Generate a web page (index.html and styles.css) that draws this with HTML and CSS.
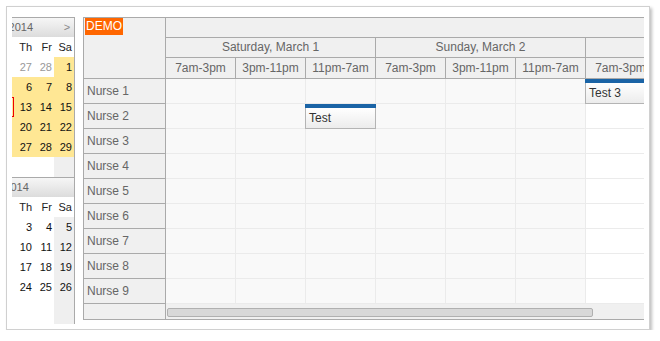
FILE: index.html
```html
<!DOCTYPE html>
<html>
<head>
    <title>Shift Scheduling</title>
    <link rel="stylesheet" href="styles.css">
</head>
<body>
    <div class="shot">
        <div class="viewport">
            <div class="nav-wrap">
                <div class="nav">
                    <div class="month">
                        <div class="month-title"><span class="arrow">&lt;</span><span class="title-text">March 2014</span><span class="arrow">&gt;</span></div>
                        <div class="week names"><span>Su</span><span>Mo</span><span>Tu</span><span>We</span><span>Th</span><span>Fr</span><span>Sa</span></div>
                        <div class="week"><span class="other">23</span><span class="other">24</span><span class="other">25</span><span class="other">26</span><span class="other">27</span><span class="other">28</span><span class="sel">1</span></div>
                        <div class="week"><span class="sel">2</span><span class="sel">3</span><span class="sel">4</span><span class="sel">5</span><span class="sel">6</span><span class="sel">7</span><span class="sel">8</span></div>
                        <div class="week"><span class="sel">9</span><span class="sel">10</span><span class="sel">11</span><span class="sel today">12</span><span class="sel">13</span><span class="sel">14</span><span class="sel">15</span></div>
                        <div class="week"><span class="sel">16</span><span class="sel">17</span><span class="sel">18</span><span class="sel">19</span><span class="sel">20</span><span class="sel">21</span><span class="sel">22</span></div>
                        <div class="week"><span class="sel">23</span><span class="sel">24</span><span class="sel">25</span><span class="sel">26</span><span class="sel">27</span><span class="sel">28</span><span class="sel">29</span></div>
                        <div class="week"><span class="we">30</span><span>31</span><span></span><span></span><span></span><span></span><span class="we"></span></div>
                    </div>
                    <div class="month">
                        <div class="month-title"><span class="arrow"></span><span class="title-text">April 2014</span><span class="arrow"></span></div>
                        <div class="week names"><span>Su</span><span>Mo</span><span>Tu</span><span>We</span><span>Th</span><span>Fr</span><span>Sa</span></div>
                        <div class="week"><span class="we other">30</span><span class="other">31</span><span>1</span><span>2</span><span>3</span><span>4</span><span class="we">5</span></div>
                        <div class="week"><span class="we">6</span><span>7</span><span>8</span><span>9</span><span>10</span><span>11</span><span class="we">12</span></div>
                        <div class="week"><span class="we">13</span><span>14</span><span>15</span><span>16</span><span>17</span><span>18</span><span class="we">19</span></div>
                        <div class="week"><span class="we">20</span><span>21</span><span>22</span><span>23</span><span>24</span><span>25</span><span class="we">26</span></div>
                        <div class="week"><span class="we"></span><span></span><span></span><span></span><span></span><span></span><span class="we"></span></div>
                        <div class="week"><span class="we"></span><span></span><span></span><span></span><span></span><span></span><span class="we"></span></div>
                    </div>
                </div>
            </div>

            <div class="scheduler">
                <div class="rows-head">
                    <div class="corner"><span class="demo">DEMO</span></div>
                    <div class="res">Nurse 1</div>
                    <div class="res">Nurse 2</div>
                    <div class="res">Nurse 3</div>
                    <div class="res">Nurse 4</div>
                    <div class="res">Nurse 5</div>
                    <div class="res">Nurse 6</div>
                    <div class="res">Nurse 7</div>
                    <div class="res">Nurse 8</div>
                    <div class="res">Nurse 9</div>
                    <div class="res-scroll"></div>
                </div>
                <div class="main">
                    <div class="hrow top"></div>
                    <div class="hrow">
                        <div class="day">Saturday, March 1</div>
                        <div class="day">Sunday, March 2</div>
                        <div class="day">Monday, March 3</div>
                    </div>
                    <div class="hrow shifts">
                        <div class="shift">7am-3pm</div>
                        <div class="shift">3pm-11pm</div>
                        <div class="shift">11pm-7am</div>
                        <div class="shift">7am-3pm</div>
                        <div class="shift">3pm-11pm</div>
                        <div class="shift">11pm-7am</div>
                        <div class="shift">7am-3pm</div>
                        <div class="shift">3pm-11pm</div>
                    </div>
                    <div class="grid">
                        <div class="row"><span></span><span></span><span></span><span></span><span></span><span></span><span class="free"></span><span class="free"></span></div>
                        <div class="row"><span></span><span></span><span></span><span></span><span></span><span></span><span class="free"></span><span class="free"></span></div>
                        <div class="row"><span></span><span></span><span></span><span></span><span></span><span></span><span class="free"></span><span class="free"></span></div>
                        <div class="row"><span></span><span></span><span></span><span></span><span></span><span></span><span class="free"></span><span class="free"></span></div>
                        <div class="row"><span></span><span></span><span></span><span></span><span></span><span></span><span class="free"></span><span class="free"></span></div>
                        <div class="row"><span></span><span></span><span></span><span></span><span></span><span></span><span class="free"></span><span class="free"></span></div>
                        <div class="row"><span></span><span></span><span></span><span></span><span></span><span></span><span class="free"></span><span class="free"></span></div>
                        <div class="row"><span></span><span></span><span></span><span></span><span></span><span></span><span class="free"></span><span class="free"></span></div>
                        <div class="row"><span></span><span></span><span></span><span></span><span></span><span></span><span class="free"></span><span class="free"></span></div>

                        <div class="event" style="top: 25px; left: 139px;"><div class="event-bar"></div><div class="event-body">Test</div></div>
                        <div class="event" style="top: 0px; left: 419px;"><div class="event-bar"></div><div class="event-body">Test 3</div></div>
                    </div>
                    <div class="hscroll"><div class="thumb"></div></div>
                </div>
            </div>
        </div>
    </div>
</body>
</html>
```

FILE: styles.css
```css
body {
    margin: 0;
    background: #fff;
    font-family: "Liberation Sans", Arial, sans-serif;
}
.shot {
    margin: 6px 0 0 6px;
    width: 632px;
    height: 312px;
    padding: 5px;
    border: 1px solid #d0d0d0;
    background: #fff;
    box-shadow: 2px 2px 3px rgba(0, 0, 0, 0.25);
}
.viewport {
    width: 632px;
    height: 312px;
    overflow: hidden;
    display: flex;
    align-items: flex-start;
    gap: 8px;
    padding-top: 5px;
    box-sizing: border-box;
}

/* navigator */
.nav-wrap {
    flex-shrink: 0;
    width: 62px;
    height: 340px;
    overflow: hidden;
    border-right: 1px solid #aaa;
}
.nav {
    width: 140px;
    margin-left: -78px;
    font-size: 11px;
}
.month {
    border-top: 1px solid #aaa;
}
.month-title {
    display: flex;
    height: 19px;
    line-height: 19px;
    color: #666;
    background: linear-gradient(#f6f6f6, #dcdcdc);
}
.month-title .arrow {
    width: 14px;
    text-align: center;
    color: #888;
}
.month-title .title-text {
    flex: 1;
    text-align: center;
}
.week {
    display: flex;
}
.week span {
    width: 20px;
    height: 20px;
    line-height: 20px;
    padding-right: 2px;
    box-sizing: border-box;
    text-align: right;
    color: #111;
}
.week.names span {
    color: #222;
}
.week .we {
    background: #efefef;
}
.week .other {
    color: #999;
}
.week .sel {
    background: #ffe794;
}
.week .today {
    border: 1px solid #e00;
}

/* scheduler */
.scheduler {
    flex-shrink: 0;
    display: flex;
    border: 1px solid #aaa;
    font-size: 12px;
    color: #666;
}
.rows-head {
    width: 81px;
    border-right: 1px solid #aaa;
    background: #f0f0f0;
}
.corner {
    height: 60px;
    border-bottom: 1px solid #aaa;
    padding-left: 1px;
}
.demo {
    display: inline-block;
    padding: 0 1px;
    line-height: 17px;
    background: #ff6600;
    color: #fff;
}
.res {
    height: 24px;
    line-height: 24px;
    padding-left: 3px;
    border-bottom: 1px solid #aaa;
}
.res-scroll {
    height: 15px;
}
.main {
    width: 560px;
}
.hrow {
    display: flex;
    height: 19px;
    line-height: 19px;
    background: #f0f0f0;
    border-bottom: 1px solid #aaa;
}
.hrow.shifts {
    height: 20px;
    line-height: 20px;
}
.day {
    flex-shrink: 0;
    width: 210px;
    box-sizing: border-box;
    border-right: 1px solid #aaa;
    text-align: center;
    white-space: nowrap;
}
.shift {
    width: 70px;
    box-sizing: border-box;
    border-right: 1px solid #aaa;
    text-align: center;
    white-space: nowrap;
}
.grid {
    position: relative;
}
.row {
    display: flex;
    height: 24px;
    border-bottom: 1px solid #ebebeb;
}
.row span {
    width: 70px;
    box-sizing: border-box;
    border-right: 1px solid #ebebeb;
    background: #f9f9f9;
}
.row span.free {
    background: #fff;
}
.event {
    position: absolute;
    width: 71px;
    height: 25px;
    box-sizing: border-box;
}
.event-bar {
    height: 4px;
    background: #1b64a6;
}
.event-body {
    height: 21px;
    line-height: 20px;
    box-sizing: border-box;
    padding-left: 3px;
    border: 1px solid #b4b4b4;
    border-top: none;
    background: linear-gradient(#fff, #ececec);
    color: #333;
}
.hscroll {
    height: 15px;
    padding: 4px 0 0 1px;
    box-sizing: border-box;
    background: #f0f0f0;
}
.thumb {
    width: 426px;
    height: 9px;
    box-sizing: border-box;
    border: 1px solid #b0b0b0;
    border-radius: 2px;
    background: #d8d8d8;
}
```
